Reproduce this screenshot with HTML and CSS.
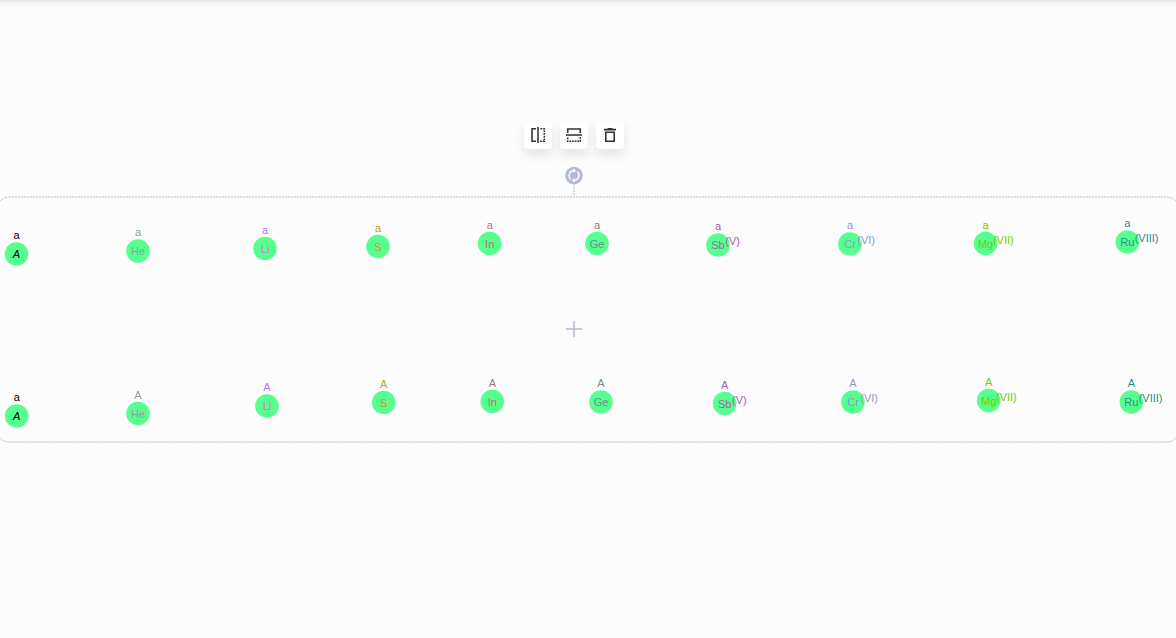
FILE: index.html
```html
<!DOCTYPE html>
<html lang="en">
<head>
<meta charset="utf-8">
<title>Structure canvas</title>
<link rel="stylesheet" href="styles.css">
</head>
<body>
<main class="editor">
  <svg class="canvas" role="img" aria-label="Structure canvas">
    <rect class="selection" x="-3" y="197" width="1182" height="245" rx="12"/>
    <path class="selection" d="M574 184V197"/>
    <g class="rotate">
      <circle cx="574" cy="175.500" r="8.800"/>
      <path class="arc" d="M570.700 179.300A5 5 0 0 1 573.700 170.600M577.300 171.700A5 5 0 0 1 574.300 180.400"/>
      <path class="head" d="M573.300 168.300V173.100L576.100 170.700ZM574.700 177.900V182.700L571.900 180.300Z"/>
    </g>
    <path class="center" d="M566 329H582M574 321V337"/>
    <g id="atoms"></g>
  </svg>
  <div class="toolbar" role="toolbar" aria-label="Selection actions">
    <button class="tool" type="button" aria-label="Horizontal flip">
      <svg viewBox="0 0 28 28"><path d="M12 7.700H8V20.300H12"/><path class="axis" d="M14 6V22"/><path class="dots" d="M16.500 7.700H20.300V20.300H16"/></svg>
    </button>
    <button class="tool" type="button" aria-label="Vertical flip">
      <svg viewBox="0 0 28 28"><path d="M7.700 12V8H20.300V12"/><path class="axis" d="M6 14H22"/><path class="dots" d="M7.700 16.500V20.300H20.300V16"/></svg>
    </button>
    <button class="tool" type="button" aria-label="Delete">
      <svg viewBox="0 0 28 28"><path d="M8 8.600H20M11.500 7.700H16.500M9.800 11.300H18.200V20.300H9.800Z"/></svg>
    </button>
  </div>
</main>
<script src="atoms.js"></script>
</body>
</html>
```

FILE: styles.css
```css
body {
  margin: 0;
  background: #fcfcfc;
  font-family: "Liberation Sans", Arial, sans-serif;
}

.editor {
  position: relative;
  height: 100vh;
  overflow: hidden;
  background: linear-gradient(#e6e6ee, #f4f4f7 3px, #fcfcfc 8px);
}

.canvas {
  display: block;
  width: 100%;
  height: 100%;
}

.selection {
  fill: none;
  stroke: #b4b9d6;
  stroke-width: 1;
  stroke-dasharray: 2 1;
}

.rotate circle {
  fill: #b4b9d6;
}

.rotate .arc {
  fill: none;
  stroke: #fff;
  stroke-width: 1.3;
}

.rotate .head {
  fill: #fff;
}

.center {
  stroke: #b4b9d6;
  stroke-width: 1.6;
}

.atom circle {
  fill: #57ff8f;
}

.atom text {
  font-size: 11px;
  text-anchor: middle;
}

.atom .valence {
  text-anchor: start;
}

.generic .symbol {
  font-style: italic;
}

.toolbar {
  position: absolute;
  top: 121px;
  left: 524px;
  display: flex;
  gap: 8px;
}

.tool {
  display: block;
  width: 28px;
  height: 28px;
  padding: 0;
  border: 0;
  border-radius: 4px;
  background: #fff;
  box-shadow: 0 6px 10px rgba(103, 104, 132, 0.15);
}

.tool svg {
  display: block;
  fill: none;
  stroke: #333;
  stroke-width: 1.6;
}

.tool .axis {
  stroke: #444;
  stroke-width: 1.7;
}

.tool .dots {
  stroke-dasharray: 1.8 0.9;
}
```

FILE: atoms.js
```js
const colors = {
  A: "#000", He: "#89a1a1", Li: "#bd77ed", S: "#c99a19", In: "#a67573",
  Ge: "#668f8f", Sb: "#9e63b5", Cr: "#8a99c7", Mg: "#6fcd00", Ru: "#248f8f"
};

// symbol, centre x, centre y, label above, valence
const atoms = [
  ["A", 16.5, 254, "a"], ["He", 138, 251, "a"], ["Li", 265, 248.5, "a"],
  ["S", 378, 246.5, "a"], ["In", 489.7, 243.5, "a"], ["Ge", 597, 243.5, "a"],
  ["Sb", 718, 245, "a", "(V)"], ["Cr", 850, 244, "a", "(VI)"],
  ["Mg", 985.6, 243.5, "a", "(VII)"], ["Ru", 1127.4, 242, "a", "(VIII)"],
  ["A", 16.7, 416, "a"], ["He", 138, 413.5, "A"], ["Li", 267, 406, "A"],
  ["S", 383.7, 402.5, "A"], ["In", 492.3, 401.5, "A"], ["Ge", 601, 402, "A"],
  ["Sb", 724.7, 403.5, "A", "(V)"], ["Cr", 853, 402, "A", "(VI)"],
  ["Mg", 988.7, 400.5, "A", "(VII)"], ["Ru", 1131.4, 402, "A", "(VIII)"]
];

document.getElementById("atoms").innerHTML = atoms.map(([symbol, x, y, label, valence]) => `
  <g class="atom${symbol === "A" ? " generic" : ""}" fill="${colors[symbol]}">
    <circle cx="${x}" cy="${y}" r="11.8"/>
    <text class="symbol" x="${x}" y="${y + 4}">${symbol}</text>
    <text x="${x}" y="${y - 15}">${label}</text>
    ${valence ? `<text class="valence" x="${x + 7.3}" y="${y}">${valence}</text>` : ""}
  </g>`).join("");
```
